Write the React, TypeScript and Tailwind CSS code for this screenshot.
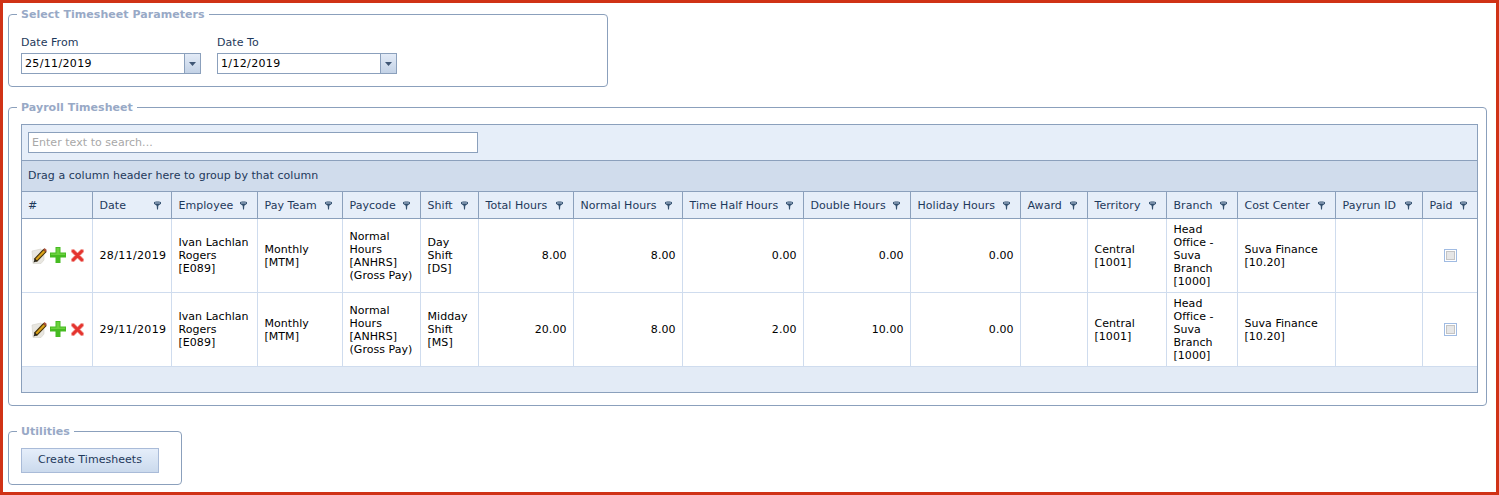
const COL_WIDTHS = [70, 79, 86, 85, 78, 58, 95, 109, 121, 107, 110, 67, 79, 71, 98, 87, 55];

const HEADERS = ['#', 'Date', 'Employee', 'Pay Team', 'Paycode', 'Shift', 'Total Hours', 'Normal Hours', 'Time Half Hours', 'Double Hours', 'Holiday Hours', 'Award', 'Territory', 'Branch', 'Cost Center', 'Payrun ID', 'Paid'];

const ROWS = [
  { date: '28/11/2019', shift: ['Day', 'Shift', '[DS]'], total: '8.00', normal: '8.00', half: '0.00', double: '0.00', holiday: '0.00' },
  { date: '29/11/2019', shift: ['Midday', 'Shift', '[MS]'], total: '20.00', normal: '8.00', half: '2.00', double: '10.00', holiday: '0.00' },
];

function FilterIcon() {
  return (
    <svg width="7" height="9" viewBox="0 0 7 9" className="shrink-0">
      <path d="M0 1.5 C0 0.3 7 0.3 7 1.5 L7 2.8 L4.3 4.8 L4 8.5 L3 8.5 L2.7 4.8 L0 2.8 Z" fill="#33506f" />
      <rect x="1" y="1.4" width="5" height="1.2" fill="#9fb3cb" />
    </svg>
  );
}

function EditIcon() {
  return (
    <svg width="16" height="17" viewBox="0 0 16 17">
      <path d="M1 4 L10 2 L13 8 L13 13 L10 16.5 L2 16.5 Z" fill="#e8e6e0" stroke="#d4d1c9" strokeWidth="0.6" />
      <path d="M3.6 12 L12.5 2.5 L15 4.8 L5.9 14.2 Z" fill="#dca31a" stroke="#47350e" strokeWidth="1.1" />
      <path d="M12.3 2.8 L13.5 1 L15.8 3 L14.7 5 Z" fill="#a94f38" />
      <path d="M3.8 11.6 L2.5 15.4 L6.3 14.2 Z" fill="#2a261b" />
    </svg>
  );
}

function PlusIcon() {
  return (
    <svg width="16" height="16" viewBox="0 0 16 16">
      <path d="M5.5 0 H10.5 V5.5 H16 V10.5 H10.5 V16 H5.5 V10.5 H0 V5.5 H5.5 Z" fill="#46bb22" />
      <path d="M6.5 1 H9.5 V6.5 H15 V8 H1 V6.5 H6.5 Z" fill="#6bd13e" />
    </svg>
  );
}

function DeleteIcon() {
  return (
    <svg width="13" height="13" viewBox="0 0 13 13">
      <path d="M2 2 L11 11 M11 2 L2 11" stroke="#f3a6a0" strokeWidth="4.4" strokeLinecap="round" />
      <path d="M2.3 2.3 L10.7 10.7 M10.7 2.3 L2.3 10.7" stroke="#e4342f" strokeWidth="3" strokeLinecap="round" />
    </svg>
  );
}

function DropDownInput({ value }: { value: string }) {
  return (
    <div className="flex h-[21px] w-[180px] border border-[#8ba0bc] bg-white">
      <div className="flex-1 pl-[3px] leading-[20px] tracking-[0.35px] text-black">{value}</div>
      <div className="flex w-[16px] items-center justify-center border-l border-[#8ba0bc] bg-gradient-to-b from-[#e3ebf7] to-[#c3d2e6]">
        <svg width="7" height="4" viewBox="0 0 7 4"><path d="M0 0 H7 L3.5 4 Z" fill="#3f5675" /></svg>
      </div>
    </div>
  );
}

function Lines({ items }: { items: string[] }) {
  return <>{items.map((t) => <div key={t}>{t}</div>)}</>;
}

const legendCls = '-ml-[4px] px-[4px] text-[11px] leading-[13px] font-bold text-[#98a9c6]';
const cellCls = 'border-r border-t border-[#cfdcee] pl-[7px] pr-[6px] pt-[1px] align-middle leading-[13px] text-black';
const numCls = 'border-r border-t border-[#cfdcee] pr-[6px] pt-[1px] text-right align-middle leading-[13px] text-black';

export default function App() {
  return (
    <div className="h-[495px] w-[1499px] overflow-hidden border-[3px] border-[#d03216] bg-white pl-[5px] text-[11px] tracking-[0.04px] text-[#1e395b] [font-family:'DejaVu_Sans',sans-serif]">
      {/* Parameters */}
      <fieldset className="mt-[5px] h-[79px] w-[600px] rounded-[4px] border border-[#8ba0bc] pl-[12px]">
        <legend className={legendCls}>Select Timesheet Parameters</legend>
        <div className="mt-[15px] flex gap-[16px]">
          <div>
            <div className="mb-[4px] leading-[13px]">Date From</div>
            <DropDownInput value="25/11/2019" />
          </div>
          <div>
            <div className="mb-[4px] leading-[13px]">Date To</div>
            <DropDownInput value="1/12/2019" />
          </div>
        </div>
      </fieldset>

      {/* Timesheet grid */}
      <fieldset className="mt-[14px] h-[305px] w-[1479px] rounded-[4px] border border-[#8ba0bc] pl-[12px]">
        <legend className={legendCls}>Payroll Timesheet</legend>
        <div className="mt-[10px] w-[1457px] border border-[#8ba0bc] bg-[#e3ebf6]">
          <div className="flex h-[36px] items-center border-b border-[#8ba0bc] bg-[#e6eef9] pl-[6px]">
            <div className="h-[21px] w-[450px] border border-[#8ba0bc] bg-white pl-[3px] leading-[20px] text-[#a8a8a8]">Enter text to search...</div>
          </div>
          <div className="flex h-[31px] items-center border-b border-[#8ba0bc] bg-[#d0dcec] pl-[6px]">Drag a column header here to group by that column</div>
          <table className="w-[1455px] table-fixed border-collapse">
            <colgroup>
              {COL_WIDTHS.map((w, i) => <col key={i} style={{ width: w }} />)}
            </colgroup>
            <thead>
              <tr className="h-[26px] bg-[#e6eef9]">
                {HEADERS.map((h, i) => (
                  <th key={h} className="border-r border-b border-[#8ba0bc] pt-[2px] pl-[7px] pr-[10px] text-left font-normal first:pl-[6px] last:border-r-0">
                    <div className="flex items-center justify-between">
                      <span className="whitespace-nowrap">{h}</span>
                      {i > 0 && <FilterIcon />}
                    </div>
                  </th>
                ))}
              </tr>
            </thead>
            <tbody>
              {ROWS.map((r) => (
                <tr key={r.date} className="h-[74px] bg-white">
                  <td className="border-r border-t border-[#cfdcee] align-middle">
                    <div className="flex items-center pl-[9px]">
                      <EditIcon />
                      <div className="ml-[3px]"><PlusIcon /></div>
                      <div className="ml-[5px]"><DeleteIcon /></div>
                    </div>
                  </td>
                  <td className={cellCls + ' tracking-[0.35px]'}>{r.date}</td>
                  <td className={cellCls}><Lines items={['Ivan Lachlan', 'Rogers', '[E089]']} /></td>
                  <td className={cellCls}><Lines items={['Monthly', '[MTM]']} /></td>
                  <td className={cellCls}><Lines items={['Normal', 'Hours', '[ANHRS]', '(Gross Pay)']} /></td>
                  <td className={cellCls}><Lines items={r.shift} /></td>
                  <td className={numCls}>{r.total}</td>
                  <td className={numCls}>{r.normal}</td>
                  <td className={numCls}>{r.half}</td>
                  <td className={numCls}>{r.double}</td>
                  <td className={numCls}>{r.holiday}</td>
                  <td className={cellCls}></td>
                  <td className={cellCls}><Lines items={['Central', '[1001]']} /></td>
                  <td className={cellCls}><Lines items={['Head', 'Office -', 'Suva', 'Branch', '[1000]']} /></td>
                  <td className={cellCls}><Lines items={['Suva Finance', '[10.20]']} /></td>
                  <td className={cellCls}></td>
                  <td className="border-t border-[#cfdcee] align-middle">
                    <div className="flex justify-center pl-[1px]">
                      <div className="flex h-[13px] w-[13px] items-center justify-center border border-[#a0bbe2] bg-white">
                        <div className="h-[9px] w-[9px] border border-[#c4c4c4] bg-[#e6e6e6]" />
                      </div>
                    </div>
                  </td>
                </tr>
              ))}
            </tbody>
          </table>
          <div className="h-[26px] border-t border-[#cfdcee] bg-[#e3ebf6]" />
        </div>
      </fieldset>

      {/* Utilities */}
      <fieldset className="mt-[19px] h-[60px] w-[174px] rounded-[4px] border border-[#8ba0bc] pl-[12px]">
        <legend className={legendCls}>Utilities</legend>
        <button className="mt-[10px] h-[25px] w-[138px] border border-[#a9bbd8] bg-gradient-to-b from-[#e5eefa] to-[#cbdaed] text-center text-[11px] text-[#1e395b]">Create Timesheets</button>
      </fieldset>
    </div>
  );
}
